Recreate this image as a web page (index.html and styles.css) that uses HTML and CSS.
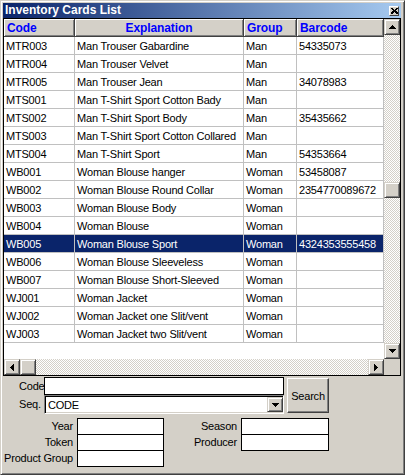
FILE: index.html
```html
<!DOCTYPE html>
<html>
<head>
<meta charset="utf-8">
<link rel="stylesheet" href="styles.css">
</head>
<body>
<div class="window">
  <div class="titlebar">
    <span class="title">Inventory Cards List</span>
    <span class="close"><svg width="7" height="6" viewBox="0 0 7 6"><path d="M0 0h2v1h1v1h1V1h1V0h2v1H6v1H5v1h1v1h1v2H5V5H4V4H3v1H2v1H0V4h1V3h1V2H1V1H0z" fill="#000"/></svg></span>
  </div>
  <div class="grid">
    <div class="table">
      <div class="row hdr">
        <div class="hcell">Code</div>
        <div class="hcell center">Explanation</div>
        <div class="hcell">Group</div>
        <div class="hcell">Barcode</div>
      </div>
      <div class="row"><div class="cell">MTR003</div><div class="cell">Man Trouser Gabardine</div><div class="cell">Man</div><div class="cell">54335073</div></div>
      <div class="row"><div class="cell">MTR004</div><div class="cell">Man Trouser Velvet</div><div class="cell">Man</div><div class="cell"></div></div>
      <div class="row"><div class="cell">MTR005</div><div class="cell">Man Trouser Jean</div><div class="cell">Man</div><div class="cell">34078983</div></div>
      <div class="row"><div class="cell">MTS001</div><div class="cell">Man T-Shirt Sport Cotton Bady</div><div class="cell">Man</div><div class="cell"></div></div>
      <div class="row"><div class="cell">MTS002</div><div class="cell">Man T-Shirt Sport Body</div><div class="cell">Man</div><div class="cell">35435662</div></div>
      <div class="row"><div class="cell">MTS003</div><div class="cell">Man T-Shirt Sport Cotton Collared</div><div class="cell">Man</div><div class="cell"></div></div>
      <div class="row"><div class="cell">MTS004</div><div class="cell">Man T-Shirt Sport</div><div class="cell">Man</div><div class="cell">54353664</div></div>
      <div class="row"><div class="cell">WB001</div><div class="cell">Woman Blouse hanger</div><div class="cell">Woman</div><div class="cell">53458087</div></div>
      <div class="row"><div class="cell">WB002</div><div class="cell">Woman Blouse Round Collar</div><div class="cell">Woman</div><div class="cell">2354770089672</div></div>
      <div class="row"><div class="cell">WB003</div><div class="cell">Woman Blouse Body</div><div class="cell">Woman</div><div class="cell"></div></div>
      <div class="row"><div class="cell">WB004</div><div class="cell">Woman Blouse</div><div class="cell">Woman</div><div class="cell"></div></div>
      <div class="row selected"><div class="cell">WB005</div><div class="cell">Woman Blouse Sport</div><div class="cell">Woman</div><div class="cell">4324353555458</div></div>
      <div class="row"><div class="cell">WB006</div><div class="cell">Woman Blouse Sleeveless</div><div class="cell">Woman</div><div class="cell"></div></div>
      <div class="row"><div class="cell">WB007</div><div class="cell">Woman Blouse Short-Sleeved</div><div class="cell">Woman</div><div class="cell"></div></div>
      <div class="row"><div class="cell">WJ001</div><div class="cell">Woman Jacket</div><div class="cell">Woman</div><div class="cell"></div></div>
      <div class="row"><div class="cell">WJ002</div><div class="cell">Woman Jacket one Slit/vent</div><div class="cell">Woman</div><div class="cell"></div></div>
      <div class="row"><div class="cell">WJ003</div><div class="cell">Woman Jacket two Slit/vent</div><div class="cell">Woman</div><div class="cell"></div></div>
    </div>
    <div class="vscroll">
      <div class="sbtn"><svg width="7" height="4" viewBox="0 0 7 4"><path d="M3 0h1v1h1v1h1v1h1v1H0V3h1V2h1V1h1z"/></svg></div>
      <div class="track vtrack"><div class="sbtn thumb-v"></div></div>
      <div class="sbtn"><svg width="7" height="4" viewBox="0 0 7 4"><path d="M0 0h7v1H6v1H5v1H4v1H3V3H2V2H1V1H0z"/></svg></div>
    </div>
    <div class="hscroll">
      <div class="sbtn"><svg width="4" height="7" viewBox="0 0 4 7"><path d="M3 0h1v7H3V6H2V5H1V4H0V3h1V2h1V1h1z"/></svg></div>
      <div class="sbtn"></div>
      <div class="track htrack"></div>
      <div class="sbtn"><svg width="4" height="7" viewBox="0 0 4 7"><path d="M0 0h1v1h1v1h1v1h1v1H3v1H2v1H1v1H0z"/></svg></div>
    </div>
    <div class="corner"></div>
  </div>
  <div class="search">
    <div class="lbl">Code</div>
    <div class="field"></div>
    <button class="button">Search</button>
    <div class="lbl">Seq.</div>
    <div class="combo">
      <span class="combo-text">CODE</span>
      <span class="sbtn drop"><svg width="7" height="4" viewBox="0 0 7 4"><path d="M0 0h7v1H6v1H5v1H4v1H3V3H2V2H1V1H0z"/></svg></span>
    </div>
  </div>
  <div class="filters">
    <div class="rlbl">Year</div><div class="field"></div>
    <div class="rlbl">Season</div><div class="field"></div>
    <div class="rlbl">Token</div><div class="field"></div>
    <div class="rlbl">Producer</div><div class="field"></div>
    <div class="rlbl">Product Group</div><div class="field"></div>
  </div>
</div>
</body>
</html>
```
FILE: styles.css
```css
html, body {
  margin: 0;
  padding: 0;
}
body {
  background: #d4d0c8;
  font-family: "Liberation Sans", Arial, sans-serif;
  font-size: 11px;
  letter-spacing: -0.2px;
  color: #000;
}
.window {
  width: 405px;
  height: 475px;
  box-sizing: border-box;
  border: 1px solid;
  border-color: #d4d0c8 #404040 #404040 #d4d0c8;
  box-shadow: inset 1px 1px #fff, inset -1px -1px #808080;
  padding: 2px 3px 2px 2px;
  display: flex;
  flex-direction: column;
}
.titlebar {
  height: 15px;
  flex: none;
  background: linear-gradient(to right, #0a246a, #a6caf0);
  display: flex;
  align-items: center;
  justify-content: space-between;
  padding-left: 2px;
}
.title {
  color: #fff;
  font-weight: bold;
  font-size: 12px;
  letter-spacing: 0;
  line-height: 15px;
}
.close {
  width: 10px;
  height: 10px;
  box-sizing: border-box;
  margin-right: 2px;
  background: #d4d0c8;
  border: 1px solid;
  border-color: #fff #404040 #404040 #fff;
  display: flex;
  align-items: center;
  justify-content: center;
}
.close svg { display: block; }
.grid {
  flex: none;
  height: 358px;
  box-sizing: border-box;
  border: 1px solid #000;
  background: #fff;
  display: grid;
  grid-template-columns: 380px 16px;
  grid-template-rows: 340px 16px;
}
.table {
  overflow: hidden;
  background: #fff;
}
.row {
  display: grid;
  grid-template-columns: 71px 169px 53px 87px;
  height: 18px;
}
.hcell {
  box-sizing: border-box;
  background: #d4d0c8;
  border-right: 1px solid #404040;
  border-bottom: 1px solid #404040;
  box-shadow: inset 1px 1px #fff, inset -1px -1px #808080;
  color: #0000ff;
  font-weight: bold;
  font-size: 12px;
  letter-spacing: -0.1px;
  padding: 1px 3px 0;
  line-height: 16px;
  white-space: nowrap;
  overflow: hidden;
}
.center { text-align: center; }
.cell {
  box-sizing: border-box;
  border-right: 1px solid #c0c0c0;
  border-bottom: 1px solid #c0c0c0;
  padding: 1px 0 0 2px;
  line-height: 16px;
  white-space: nowrap;
  overflow: hidden;
}
.selected .cell {
  background: #0a246a;
  color: #fff;
}
.sbtn {
  width: 16px;
  height: 16px;
  flex: none;
  box-sizing: border-box;
  background: #d4d0c8;
  border: 1px solid;
  border-color: #d4d0c8 #404040 #404040 #d4d0c8;
  box-shadow: inset 1px 1px #fff, inset -1px -1px #808080;
  display: flex;
  align-items: center;
  justify-content: center;
}
.sbtn svg { display: block; fill: #000; }
.vscroll {
  display: flex;
  flex-direction: column;
}
.hscroll {
  display: flex;
}
.track {
  flex: 1;
  background: repeating-conic-gradient(#d4d0c8 0 25%, #fff 0 50%) 0 0 / 2px 2px;
}
.vtrack {
  display: flex;
  flex-direction: column;
}
.thumb-v {
  margin-top: 147px;
}
.corner {
  background: #d4d0c8;
}
.search {
  flex: none;
  margin-top: 1px;
  display: grid;
  grid-template-columns: 41px 240px 3px 42px;
  grid-template-rows: 18px 19px;
}
.lbl {
  grid-column: 1;
  padding: 1px 0 0 16px;
  line-height: 17px;
  white-space: nowrap;
}
.field {
  box-sizing: border-box;
  border: 1px solid #000;
  background: #fff;
  height: 17px;
}
.search .field {
  grid-column: 2;
  height: 18px;
}
.button {
  grid-column: 4;
  grid-row: 1 / 3;
  margin: 1px 0;
  padding: 0;
  box-sizing: border-box;
  background: #d4d0c8;
  border: 1px solid;
  border-color: #fff #404040 #404040 #fff;
  box-shadow: inset -1px -1px #808080;
  font-family: "Liberation Sans", Arial, sans-serif;
  font-size: 11px;
  letter-spacing: -0.2px;
  color: #000;
}
.combo {
  grid-column: 2;
  box-sizing: border-box;
  border: 1px solid;
  border-color: #808080 #fff #fff #808080;
  box-shadow: inset 1px 1px #000, inset -1px -1px #d4d0c8;
  background: #fff;
  display: flex;
  align-items: flex-start;
  padding: 1px 0 1px 1px;
}
.combo-text {
  flex: 1;
  padding-left: 2px;
  line-height: 16px;
}
.drop {
  height: 15px;
}
.filters {
  flex: none;
  margin-top: 4px;
  display: grid;
  grid-template-columns: 74px 87px 77px 88px;
  grid-auto-rows: 16px;
}
.rlbl {
  text-align: right;
  padding-right: 4px;
  line-height: 17px;
  white-space: nowrap;
}
```
